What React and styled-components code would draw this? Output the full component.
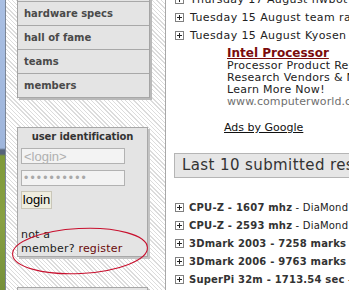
import React from 'react';
import styled, { createGlobalStyle } from 'styled-components';

const verdana = `"DejaVu Sans", Verdana, sans-serif`;
const arial = `"Liberation Sans", Arial, sans-serif`;

const GlobalStyle = createGlobalStyle`
  html, body {
    margin: 0;
    padding: 0;
    overflow: hidden;
    background: #fff;
  }
`;

const menu = ['links', 'hardware specs', 'hall of fame', 'teams', 'members'];

const news = [
  'Thursday 17 August hwbot & friends',
  'Tuesday 15 August team rankings updated',
  'Tuesday 15 August Kyosen gets a new record',
];

const results = [
  { bold: 'CPU-Z - 1607 mhz', rest: ' - DiaMond (hwbot)' },
  { bold: 'CPU-Z - 2593 mhz', rest: ' - DiaMond (hwbot)' },
  { bold: '3Dmark 2003 - 7258 marks', rest: ' - DiaMond' },
  { bold: '3Dmark 2006 - 9763 marks', rest: ' - DiaMond' },
  { bold: 'SuperPi 32m - 1713.54 sec', rest: ' - DiaMond' },
];

function PlusIcon() {
  return (
    <svg width="9" height="9" viewBox="0 0 9 9">
      <rect x="0.5" y="0.5" width="8" height="8" fill="#fff" stroke="#808080" />
      <path d="M2 4.5h5M4.5 2v5" stroke="#222" strokeWidth="1" />
    </svg>
  );
}

function App() {
  return (
    <Page>
      <GlobalStyle />
      <Desktop />
      <Sidebar>
        <Menu>
          {menu.map((item) => (
            <MenuItem key={item}>{item}</MenuItem>
          ))}
        </Menu>

        <Panel>
          <PanelTitle>user identification</PanelTitle>
          <Field type="text" placeholder="<login>" readOnly />
          <Field type="password" defaultValue="xxxxxxxxxx" readOnly $secret />
          <LoginButton>login</LoginButton>
          <Signup>
            not a<br />
            member? <a href="#register">register</a>
          </Signup>
        </Panel>
        <Panel $stub />

        <Scribble width="159" height="70" viewBox="0 0 159 70">
          <ellipse
            cx="74"
            cy="31"
            rx="67.5"
            ry="22.5"
            fill="none"
            stroke="#c8102e"
            strokeWidth="1.1"
            transform="rotate(-3 74 31)"
          />
        </Scribble>
      </Sidebar>

      <Content>
        <NewsList>
          {news.map((n) => (
            <Row key={n}>
              <PlusIcon />
              <RowText>{n}</RowText>
            </Row>
          ))}
        </NewsList>

        <Ad>
          <AdTitle href="#ad">Intel Processor</AdTitle>
          <AdLine>Processor Product Reviews,</AdLine>
          <AdLine>Research Vendors &amp; News.</AdLine>
          <AdLine>Learn More Now!</AdLine>
          <AdLine $url>www.computerworld.com</AdLine>
        </Ad>
        <AdsBy href="#google">Ads by Google</AdsBy>

        <SectionTitle>Last 10 submitted results</SectionTitle>

        <Results>
          {results.map((r, i) => (
            <Row key={i} $tight>
              <PlusIcon />
              <RowText $small>
                <b>{r.bold}</b>
                {r.rest}
              </RowText>
            </Row>
          ))}
        </Results>
      </Content>
    </Page>
  );
}

export default App;

const Page = styled.div`
  display: flex;
  width: 349px;
  height: 290px;
  overflow: hidden;
`;

const Desktop = styled.div`
  width: 5px;
  flex-shrink: 0;
  border-right: 1px solid #7b8596;
  background: linear-gradient(
    to bottom,
    #a9bfe3 0,
    #9fb6dc 148px,
    #56647a 150px,
    #56647a 154px,
    #7f9a3a 156px,
    #88a043 220px,
    #76903a 290px
  );
`;

const Sidebar = styled.div`
  position: relative;
  width: 160px;
  flex-shrink: 0;
  box-sizing: border-box;
  border-right: 1px solid #a8a8a8;
  padding-left: 11px;
  background-color: #fff;
  background-image: repeating-linear-gradient(
    45deg,
    #fff 0,
    #fff 2px,
    #dcdcdc 2px,
    #dcdcdc 3px
  );
  display: flex;
  flex-direction: column;
  align-items: flex-start;
`;

const Menu = styled.div`
  width: 131px;
  margin-top: -22px;
  border: 1px solid #a4a4a4;
  border-top: none;
  border-bottom: none;
  background: #e4e4e4;
  box-shadow: 2px 2px 0 #b9b9b9;
`;

const MenuItem = styled.div`
  height: 24px;
  box-sizing: border-box;
  border-bottom: 1px solid #a8a8a8;
  padding-left: 6px;
  font-family: ${verdana};
  font-size: 10px;
  font-weight: bold;
  line-height: 23px;
  color: #4a4a4a;
`;

const Panel = styled.div`
  width: 131px;
  box-sizing: border-box;
  margin-top: ${(p) => (p.$stub ? '30px' : '29px')};
  height: ${(p) => (p.$stub ? '20px' : '132px')};
  border: 1px solid #a8a8a8;
  background: #e4e4e4;
  box-shadow: 2px 2px 0 #c4c4c4;
  padding: 2px 0 0 3px;
  display: flex;
  flex-direction: column;
  align-items: flex-start;
`;

const PanelTitle = styled.div`
  align-self: stretch;
  margin-left: -3px;
  text-align: center;
  font-family: ${verdana};
  font-size: 10px;
  font-weight: bold;
  line-height: 14px;
  color: #333;
  letter-spacing: -0.1px;
`;

const Field = styled.input`
  width: 104px;
  height: 16px;
  box-sizing: border-box;
  margin: ${(p) => (p.$secret ? '6px' : '4px')} 0 0;
  padding: 0 2px;
  border: 1px solid #b2b2b2;
  background: #f3f3f3;
  font-family: ${arial};
  font-size: ${(p) => (p.$secret ? '12px' : '13px')};
  letter-spacing: ${(p) => (p.$secret ? '2.2px' : '0')};
  color: #a9a9a9;
  outline: none;
  &::placeholder {
    color: #b0b0b0;
  }
`;

const LoginButton = styled.button`
  margin-top: 5px;
  width: 31px;
  height: 18px;
  padding: 0;
  border: 1px solid #c9c6b8;
  background: #efeddf;
  font-family: ${arial};
  font-size: 13px;
  line-height: 16px;
  color: #000;
`;

const Signup = styled.div`
  margin-top: 19px;
  font-family: ${verdana};
  font-size: 11px;
  line-height: 14px;
  color: #222;
  letter-spacing: 0.2px;

  a {
    color: #6a0a0a;
    text-decoration: none;
  }
`;

const Scribble = styled.svg`
  position: absolute;
  left: 0;
  top: 220px;
  overflow: visible;
  pointer-events: none;
`;

const Content = styled.div`
  flex: 1;
  min-width: 0;
  background: #fff;
  padding-left: 8px;
  overflow: hidden;
`;

const NewsList = styled.div`
  margin-top: -10px;
  padding-left: 1px;
`;

const Results = styled.div`
  margin-top: 20px;
  padding-left: 1px;
`;

const Row = styled.div`
  display: flex;
  align-items: center;
  gap: ${(p) => (p.$tight ? '5px' : '6px')};
  height: 18px;
  white-space: nowrap;

  svg {
    flex-shrink: 0;
  }
`;

const RowText = styled.span`
  font-family: ${verdana};
  font-size: ${(p) => (p.$small ? '10px' : '11px')};
  color: #222;
  letter-spacing: ${(p) => (p.$small ? '0.2px' : '0.4px')};

  b {
    color: #333;
  }
`;

const Ad = styled.div`
  margin: 2px 0 0 53px;
  white-space: nowrap;
  font-family: ${verdana};
`;

const AdTitle = styled.a`
  display: block;
  font-size: 12px;
  font-weight: bold;
  line-height: 14px;
  color: #7a0c0c;
  text-decoration: underline;
`;

const AdLine = styled.div`
  font-size: 11px;
  line-height: 12px;
  letter-spacing: ${(p) => (p.$url ? '0.1px' : '0.3px')};
  color: ${(p) => (p.$url ? '#6f6f6f' : '#222')};
`;

const AdsBy = styled.a`
  display: block;
  margin: 13px 0 0 50px;
  font-family: ${verdana};
  font-size: 11px;
  line-height: 14px;
  color: #111;
  text-decoration: underline;
`;

const SectionTitle = styled.div`
  margin-top: 18px;
  height: 25px;
  box-sizing: border-box;
  border: 1px solid #b5b5b5;
  border-right: none;
  background: #e6e6e6;
  padding-left: 7px;
  font-family: ${verdana};
  font-size: 15px;
  line-height: 23px;
  color: #333;
  white-space: nowrap;
  letter-spacing: 0.4px;
`;
